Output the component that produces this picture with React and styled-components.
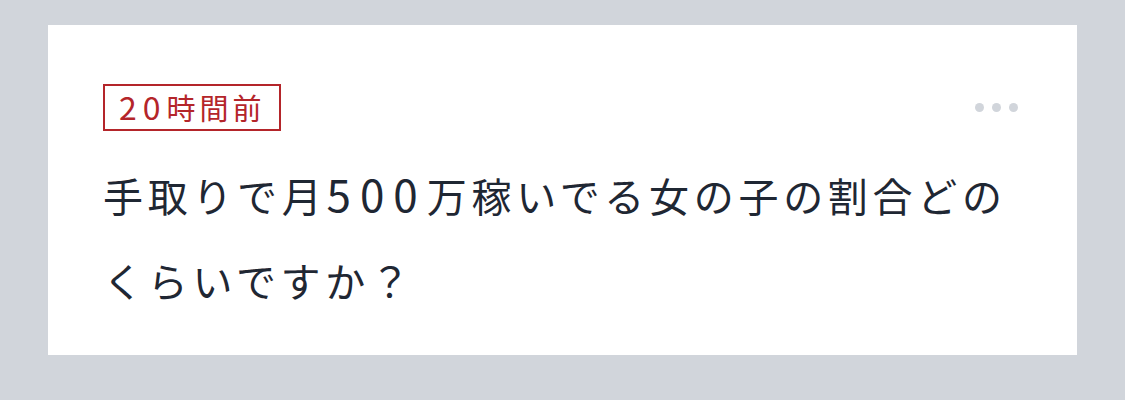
import styled, { createGlobalStyle } from 'styled-components';

const GlobalStyle = createGlobalStyle`
  html, body {
    margin: 0;
    padding: 0;
    background: #d1d5db;
  }
  body {
    font-family: "Noto Sans CJK JP", "Noto Sans", sans-serif;
  }
`;

export default function App() {
  return (
    <>
      <GlobalStyle />
      <Page>
        <PostCard>
          <CardHeader>
            <TimeBadge>
              <Num $gap="6px">20</Num>時間前
            </TimeBadge>
            <MoreButton aria-label="more">
              <Dot />
              <Dot />
              <Dot />
            </MoreButton>
          </CardHeader>
          <Title>
            手取りで月<Num $gap="9px">500</Num>万稼いでる女の子の割合どのくらいですか？
          </Title>
        </PostCard>
      </Page>
    </>
  );
}

const Page = styled.div`
  padding: 25px 48px 46px 48px;
  min-height: 400px;
  box-sizing: border-box;
`;

const PostCard = styled.div`
  background: #ffffff;
  padding: 59px 59px 32px 55px;
  display: flex;
  flex-direction: column;
  gap: 22px;
`;

const CardHeader = styled.div`
  display: flex;
  align-items: center;
  justify-content: space-between;
`;

const TimeBadge = styled.span`
  border: 2px solid #b4252a;
  color: #b4252a;
  font-size: 29px;
  line-height: 43px;
  padding: 0 14px 0 14px;
  letter-spacing: 4px;
`;

// digits sit a touch larger than the kana and kanji around them
const Num = styled.span`
  font-size: 1.1em;
  line-height: 1;
  letter-spacing: ${(p) => p.$gap};
`;

const MoreButton = styled.div`
  display: flex;
  gap: 8px;
`;

const Dot = styled.span`
  width: 9px;
  height: 9px;
  border-radius: 50%;
  background: #d1d5db;
`;

const Title = styled.h1`
  margin: 0;
  font-weight: 400;
  font-size: 40px;
  line-height: 85px;
  letter-spacing: 4.7px;
  color: #1f2733;
`;
